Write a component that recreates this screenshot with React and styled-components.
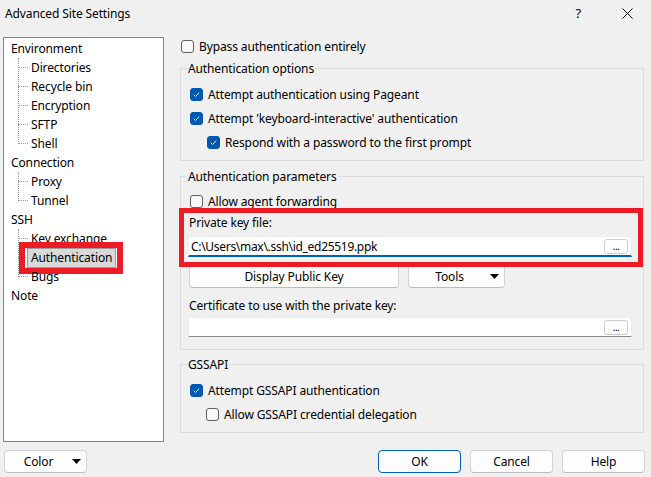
import React from "react";
import styled, { createGlobalStyle } from "styled-components";

const GlobalStyle = createGlobalStyle`
  html, body {
    margin: 0;
    padding: 0;
    background: #f0f0f0;
  }
  body {
    font-family: "Noto Sans", "Segoe UI", sans-serif;
    font-size: 12px;
    letter-spacing: -0.12px;
    color: #000;
  }
  * {
    box-sizing: border-box;
  }
`;

const treeItems = [
  { label: "Environment", children: ["Directories", "Recycle bin", "Encryption", "SFTP", "Shell"] },
  { label: "Connection", children: ["Proxy", "Tunnel"] },
  { label: "SSH", children: ["Key exchange", "Authentication", "Bugs"] },
  { label: "Note", children: [] },
];

const Check = ({ checked }) => (
  <CheckBox $checked={checked}>
    {checked && (
      <svg width="9" height="9" viewBox="0 0 9 9">
        <path d="M1.8 4.8 L3.6 6.5 L7.2 2.6" fill="none" stroke="#dfeaf6" strokeWidth="1" />
      </svg>
    )}
  </CheckBox>
);

const CheckOption = ({ checked, indent, children }) => (
  <CheckRow $indent={indent}>
    <Check checked={checked} />
    <span>{children}</span>
  </CheckRow>
);

const Arrow = () => (
  <svg width="9" height="5" viewBox="0 0 9 5">
    <path d="M0 0 H9 L4.5 5 Z" fill="#000" />
  </svg>
);

const App = () => {
  return (
    <Window>
      <GlobalStyle />
      <TitleBar>
        <Title>Advanced Site Settings</Title>
        <TitleButtons>
          <span>?</span>
          <svg width="11" height="11" viewBox="0 0 11 11">
            <path d="M0.5 0.5 L10.5 10.5 M10.5 0.5 L0.5 10.5" stroke="#000" strokeWidth="1" />
          </svg>
        </TitleButtons>
      </TitleBar>

      <Body>
        <Tree>
          {treeItems.map((item) => (
            <div key={item.label}>
              <TreeRow>{item.label}</TreeRow>
              {item.children.length > 0 && (
                <ChildList>
                  {item.children.map((child) => (
                    <ChildRow key={child}>
                      {child === "Authentication" ? (
                        <Selected>
                          {child}
                          <TreeHighlight />
                        </Selected>
                      ) : (
                        child
                      )}
                    </ChildRow>
                  ))}
                </ChildList>
              )}
            </div>
          ))}
        </Tree>

        <Panel>
          <TopRow>
            <CheckOption>Bypass authentication entirely</CheckOption>
          </TopRow>

          <Group $top={5} $pt={6} $pb={6}>
            <Legend>Authentication options</Legend>
            <CheckOption checked>Attempt authentication using Pageant</CheckOption>
            <CheckOption checked>Attempt 'keyboard-interactive' authentication</CheckOption>
            <CheckOption checked indent={17}>
              Respond with a password to the first prompt
            </CheckOption>
          </Group>

          <Group $top={7} $pt={5} $pb={12}>
            <Legend>Authentication parameters</Legend>
            <CheckOption>Allow agent forwarding</CheckOption>
            <KeySection>
              <FieldLabel>Private key file:</FieldLabel>
              <TextBox $focused>
                <span>C:\Users\max\.ssh\id_ed25519.ppk</span>
                <BrowseButton>...</BrowseButton>
              </TextBox>
              <KeyHighlight />
            </KeySection>
            <ButtonRow>
              <Button $width={210}>Display Public Key</Button>
              <MenuButton $width={97}>
                <span>Tools</span>
                <Arrow />
              </MenuButton>
            </ButtonRow>
            <FieldLabel $top={9}>Certificate to use with the private key:</FieldLabel>
            <TextBox $top={2} $height={20}>
              <span />
              <BrowseButton>...</BrowseButton>
            </TextBox>
          </Group>

          <Group $top={6} $pt={6} $pb={6}>
            <Legend>GSSAPI</Legend>
            <CheckOption checked>Attempt GSSAPI authentication</CheckOption>
            <CheckOption indent={16}>Allow GSSAPI credential delegation</CheckOption>
          </Group>
        </Panel>
      </Body>

      <Footer>
        <MenuButton $width={83}>
          <span>Color</span>
          <Arrow />
        </MenuButton>
        <DialogButtons>
          <Button $width={83} $default>OK</Button>
          <Button $width={83}>Cancel</Button>
          <Button $width={83}>Help</Button>
        </DialogButtons>
      </Footer>
    </Window>
  );
};

export default App;

const Window = styled.div`
  width: 651px;
  height: 477px;
  display: flex;
  flex-direction: column;
  background: #f0f0f0;
  overflow: hidden;
`;

const TitleBar = styled.div`
  height: 30px;
  display: flex;
  align-items: center;
  padding: 0 18px 4px 5px;
`;

const Title = styled.div`
  font-size: 12px;
`;

const TitleButtons = styled.div`
  margin-left: auto;
  display: flex;
  align-items: center;
  gap: 41px;
  font-size: 13px;
`;

const Body = styled.div`
  display: flex;
  gap: 16px;
  padding: 7px 0 0 3px;
`;

const Tree = styled.div`
  width: 161px;
  height: 405px;
  background: #fff;
  border: 1px solid #82878f;
  padding: 1px 0 0 7px;
`;

const TreeRow = styled.div`
  height: 19px;
  line-height: 19px;
  white-space: nowrap;
`;

const ChildList = styled.div`
  position: relative;
  margin-left: 7px;
  &::before {
    content: "";
    position: absolute;
    left: 0;
    top: 0;
    bottom: 9px;
    border-left: 1px dotted #9a9a9a;
  }
`;

const ChildRow = styled(TreeRow)`
  position: relative;
  padding-left: 13px;
  &::before {
    content: "";
    position: absolute;
    left: 0;
    top: 9px;
    width: 10px;
    border-top: 1px dotted #9a9a9a;
  }
`;

const Selected = styled.span`
  position: relative;
  display: inline-block;
  height: 20px;
  line-height: 18px;
  margin-left: -4px;
  padding: 0 3px;
  background: #d9d9d9;
  border: 1px solid #9b9b9b;
`;

const TreeHighlight = styled.span`
  position: absolute;
  top: -7px;
  bottom: -7px;
  left: -9px;
  right: -8px;
  border: 6px solid #ed1c24;
  pointer-events: none;
`;

const Panel = styled.div`
  width: 464px;
  display: flex;
  flex-direction: column;
`;

const TopRow = styled.div`
  height: 18px;
  display: flex;
  align-items: center;
  padding-left: 1px;
`;

const CheckRow = styled.div`
  height: 24px;
  display: flex;
  align-items: center;
  gap: 5px;
  padding-left: ${(p) => (p.$indent || 0) + 2}px;
  white-space: nowrap;
  ${TopRow} & {
    height: 18px;
    padding-left: 0;
  }
`;

const CheckBox = styled.span`
  width: 13px;
  height: 13px;
  flex: none;
  display: flex;
  align-items: center;
  justify-content: center;
  border-radius: 3px;
  border: 1px solid ${(p) => (p.$checked ? "#0058b0" : "#5f5f5f")};
  background: ${(p) => (p.$checked ? "#0058b0" : "#f9f9f9")};
`;

const Group = styled.fieldset`
  margin: ${(p) => p.$top}px 0 0 0;
  min-width: 0;
  border: 1px solid #dcdcdc;
  padding: ${(p) => p.$pt}px 11px ${(p) => p.$pb}px 7px;
  display: flex;
  flex-direction: column;
`;

const Legend = styled.legend`
  padding: 0 1px;
  margin-left: -1px;
  line-height: 16px;
  height: 16px;
  transform: translateY(1px);
`;

const KeySection = styled.div`
  position: relative;
  margin-top: 1px;
  display: flex;
  flex-direction: column;
`;

const KeyHighlight = styled.span`
  position: absolute;
  top: -6px;
  bottom: -10px;
  left: -9px;
  right: -11px;
  border: 5px solid #ed1c24;
  pointer-events: none;
`;

const FieldLabel = styled.div`
  height: 18px;
  line-height: 18px;
  margin-top: ${(p) => p.$top || 0}px;
  padding-left: 1px;
`;

const TextBox = styled.div`
  margin-top: ${(p) => (p.$top === undefined ? 4 : p.$top)}px;
  height: ${(p) => p.$height || 21}px;
  display: flex;
  align-items: center;
  justify-content: space-between;
  padding: 0 3px 0 2px;
  background: #fff;
  border: 1px solid #ececec;
  border-bottom: ${(p) => (p.$focused ? "2px solid #005fb8" : "1px solid #8a8a8a")};
  border-radius: 3px 3px 0 0;
  font-size: 12px;
  letter-spacing: -0.3px;
`;

const BrowseButton = styled.span`
  width: 24px;
  height: 15px;
  display: flex;
  align-items: flex-end;
  justify-content: center;
  padding-bottom: 2px;
  font-size: 10px;
  line-height: 10px;
  background: #fdfdfd;
  border: 1px solid #cfcfcf;
  border-radius: 3px;
  letter-spacing: -0.5px;
`;

const ButtonRow = styled.div`
  display: flex;
  gap: 9px;
  margin-top: 8px;
  padding-left: 1px;
`;

const Button = styled.div`
  width: ${(p) => p.$width}px;
  height: 23px;
  display: flex;
  align-items: center;
  justify-content: center;
  background: #fdfdfd;
  border: 1px solid ${(p) => (p.$default ? "#005fb8" : "#d3d3d3")};
  border-bottom-color: ${(p) => (p.$default ? "#005fb8" : "#bdbdbd")};
  border-radius: 4px;
`;

const MenuButton = styled(Button)`
  justify-content: space-between;
  padding: 0 5px 0 0;
  span {
    flex: 1;
    text-align: center;
  }
`;

const Footer = styled.div`
  display: flex;
  justify-content: space-between;
  padding: 8px 6px 0 4px;
  margin-top: auto;
  height: 35px;
`;

const DialogButtons = styled.div`
  display: flex;
  gap: 9px;
`;
